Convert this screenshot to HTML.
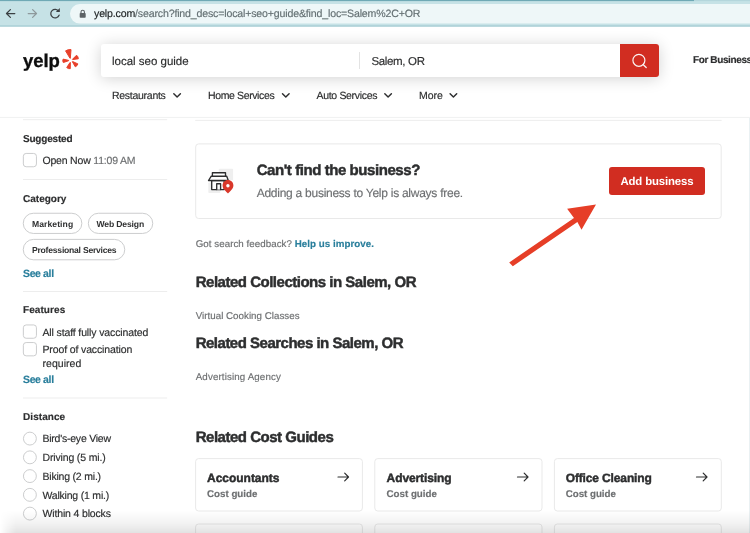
<!DOCTYPE html>
<html lang="en">
<head>
<meta charset="utf-8">
<title>Yelp search - local seo guide - Salem, OR</title>
<style>
html,body{margin:0;padding:0;background:#fff;}
body{will-change:transform;text-rendering:geometricPrecision;width:750px;height:533px;position:relative;overflow:hidden;font-family:"Liberation Sans","DejaVu Sans",sans-serif;color:#2d2e2f;}
.a{position:absolute;white-space:nowrap;line-height:1;}
.t{position:absolute;white-space:nowrap;line-height:1;-webkit-text-stroke:0.16px currentColor;}
.b{font-weight:bold;}
.hv{-webkit-text-stroke:0.45px currentColor;}
.ns{-webkit-text-stroke:0;color:#303132;}
.nw{-webkit-text-stroke:0;}
.g{color:#6e7072;}
.lnk{color:#2a7f9c;font-weight:bold;}
</style>
</head>
<body>

<!-- browser chrome -->
<svg class="a" id="chrome" style="left:0;top:0" width="750" height="28" viewBox="0 0 750 28">
  <rect x="0" y="0" width="750" height="25.6" fill="#c6e2e6"/>
  <rect x="0" y="25.300" width="750" height="1.400" fill="#9fc9d1"/>
  <rect x="0" y="0" width="694" height="1.100" fill="#6fa9b5"/>
  <rect x="694" y="0" width="56" height="1.100" fill="#b4d6dc"/>
  <rect x="70" y="4.100" width="700" height="19.500" rx="9.750" fill="#eef7f8"/>
</svg>
<svg class="a" id="navicons" style="left:0;top:0" width="95" height="26" viewBox="0 0 95 26">
  <g fill="none" stroke="#3b4043" stroke-width="1.25" stroke-linecap="round" stroke-linejoin="round">
    <path d="M14.8 13.5H6.6M10.4 9.6L6.5 13.5L10.4 17.4"/>
    <path d="M28.2 13.5h8.2M32.6 9.6l3.900 3.900l-3.900 3.900" stroke="#8e999c"/>
    <path d="M58.700 11.300A4.300 4.300 0 1 0 59.100 15.200"/>
  </g>
  <path d="M59.800 8v4h-4z" fill="#3b4043"/>
  <rect x="79.700" y="13" width="6" height="4.800" rx="0.800" fill="#5c6366"/>
  <path d="M81 13.200v-1.200a1.700 1.700 0 0 1 3.400 0v1.200" fill="none" stroke="#5c6366" stroke-width="1.100"/>
</svg>
<div class="t" id="url" style="left:94px;top:9px;font-size:10.6px;color:#647073;letter-spacing:-0.166px;"><span style="color:#202526">yelp.com</span>/search?find_desc=local+seo+guide&amp;find_loc=Salem%2C+OR</div>

<!-- header -->
<div class="t b" id="logo" style="left:23px;top:52px;font-size:18.5px;color:#0d0d0d;-webkit-text-stroke:0.35px #0d0d0d;letter-spacing:-0.033px;">yelp</div>
<svg class="a" id="burst" style="left:60px;top:46px" width="22" height="26" viewBox="60 46 22 26">
  <path d="M70.31 58.28L71.03 49.60Q68.10 49.35 65.57 50.86L70.02 58.35zM72.60 59.57L78.35 58.77Q78.26 56.58 76.57 55.19L72.47 59.30zM72.35 61.71L75.30 66.80Q77.28 65.95 77.91 63.90L72.55 61.49zM70.08 62.43L66.73 67.58Q68.24 68.98 70.27 68.66L70.37 62.52zM68.69 60.38L63.12 59.12Q62.31 60.87 63.30 62.52L68.71 60.68z" fill="#e8402a" stroke="#e8402a" stroke-width="1" stroke-linejoin="round"/>
</svg>

<div class="a" id="searchbox" style="left:101px;top:44px;width:558px;height:32.5px;border-radius:3px;background:#fff;box-shadow:0 1.5px 15px rgba(0,0,0,0.18);"></div>
<div class="a" id="sdiv" style="left:359px;top:52px;width:1px;height:17px;background:#e3e3e3;"></div>
<div class="a" id="sbtn" style="left:620px;top:44px;width:39px;height:32.5px;border-radius:0 3px 3px 0;background:#d12d21;"></div>
<svg class="a" id="sicon" style="left:629px;top:49px" width="22" height="22" viewBox="629 49 22 22">
  <circle cx="638.900" cy="60.300" r="6" fill="none" stroke="#fbf3f2" stroke-width="1.200"/>
  <path d="M643.300 64.800L646.200 67.500" stroke="#fbf3f2" stroke-width="1.300" stroke-linecap="round"/>
</svg>
<div class="t" id="q1" style="left:112px;top:57px;font-size:11.5px;letter-spacing:-0.009px;">local seo guide</div>
<div class="t" id="q2" style="left:371.500px;top:57px;font-size:11.5px;letter-spacing:-0.350px;">Salem, OR</div>
<div class="t b" id="forbiz" style="left:693px;top:56px;font-size:10px;letter-spacing:-0.380px;">For Business</div>

<div class="t" id="n1" style="left:112px;top:91px;font-size:10.500px;letter-spacing:-0.275px;">Restaurants</div>
<div class="t" id="n2" style="left:208px;top:91px;font-size:10.500px;letter-spacing:-0.377px;">Home Services</div>
<div class="t" id="n3" style="left:316.500px;top:91px;font-size:10.500px;letter-spacing:-0.322px;">Auto Services</div>
<div class="t" id="n4" style="left:419px;top:91px;font-size:10.500px;letter-spacing:-0.057px;">More</div>
<svg class="a" id="chev" style="left:0;top:85px" width="470" height="20" viewBox="0 0 470 20">
  <g fill="none" stroke="#2d2e2f" stroke-width="1.450" stroke-linecap="round" stroke-linejoin="round">
    <path d="M173.800 8.700l3.300 3.300l3.300-3.300"/>
    <path d="M282.500 8.700l3.300 3.300l3.300-3.300"/>
    <path d="M384.800 8.700l3.300 3.300l3.300-3.300"/>
    <path d="M450.100 8.700l3.300 3.300l3.300-3.300"/>
  </g>
</svg>

<div class="a" id="rmark" style="left:749px;top:507.5px;width:1px;height:3px;background:#9b9b9b;"></div>
<div class="a" id="redge" style="left:749px;top:118px;width:1px;height:415px;background:#eaf1f3;"></div>

<!-- sidebar -->
<svg class="a" id="shapes" style="left:0;top:110px" width="750" height="423" viewBox="0 110 750 423">
  <g fill="none" stroke="#f0f1f1" stroke-width="1">
    <path d="M0 117.400H750"/>
  </g>
  <g fill="none" stroke="#ededed" stroke-width="1">
    <path d="M23 119.700H167.200M195.200 120.400H721.600M23 179.500H167.200M23 291.500H167.200M23 398H167.200"/>
  </g>
  <g fill="#fff" stroke="#e9e9e9" stroke-width="1">
    <rect x="195.70" y="143.90" width="525.50" height="74.60" rx="3"/>
    <rect x="195.60" y="458.60" width="166.80" height="52.40" rx="3"/>
    <rect x="195.60" y="524.00" width="166.80" height="52.50" rx="3"/>
    <rect x="374.80" y="458.60" width="167.20" height="52.40" rx="3"/>
    <rect x="374.80" y="524.00" width="167.20" height="52.50" rx="3"/>
    <rect x="554.40" y="458.60" width="166.90" height="52.40" rx="3"/>
    <rect x="554.40" y="524.00" width="166.90" height="52.50" rx="3"/>
  </g>
  <g fill="#fff" stroke="#c6c7c8" stroke-width="0.900">
    <rect x="23.350" y="153.45" width="13.100" height="13.300" rx="2.800"/>
    <rect x="23.350" y="324.95" width="13.100" height="13.300" rx="2.800"/>
    <rect x="23.350" y="342.55" width="13.100" height="13.300" rx="2.800"/>
    <circle cx="29.900" cy="438.60" r="6.450"/>
    <circle cx="29.900" cy="457.35" r="6.450"/>
    <circle cx="29.900" cy="476.10" r="6.450"/>
    <circle cx="29.900" cy="494.85" r="6.450"/>
    <circle cx="29.900" cy="513.60" r="6.450"/>
    <rect x="23.250" y="213.250" width="58.600" height="20.200" rx="10.100"/>
    <rect x="88.350" y="213.250" width="64.400" height="20.200" rx="10.100"/>
    <rect x="23.250" y="239.400" width="101.500" height="20.400" rx="10.200"/>
  </g>
</svg>
<div class="t b" id="s1" style="left:23px;top:135px;font-size:10px;letter-spacing:-0.204px;">Suggested</div>
<div class="t" id="s2" style="left:42.50px;top:156px;font-size:10.500px;letter-spacing:-0.196px;">Open Now <span class="g">11:09 AM</span></div>

<div class="t b" id="s3" style="left:23px;top:195px;font-size:10px;letter-spacing:0.006px;">Category</div>
<div class="t b ns" id="p1" style="left:32.00px;top:220px;font-size:8.6px;letter-spacing:0.067px;">Marketing</div>
<div class="t b ns" id="p2" style="left:96.50px;top:220px;font-size:8.6px;letter-spacing:-0.153px;">Web Design</div>
<div class="t b ns" id="p3" style="left:32.00px;top:246px;font-size:8.6px;letter-spacing:-0.235px;">Professional Services</div>
<div class="t lnk" id="s4" style="left:23px;top:269px;font-size:10.500px;letter-spacing:-0.369px;">See all</div>

<div class="t b" id="s5" style="left:23px;top:306px;font-size:10px;letter-spacing:0.075px;">Features</div>
<div class="t" id="s6" style="left:42.500px;top:328px;font-size:10.500px;letter-spacing:-0.129px;">All staff fully vaccinated</div>
<div class="t" id="s7" style="left:42.500px;top:345px;font-size:10.500px;letter-spacing:-0.131px;">Proof of vaccination</div>
<div class="t" id="s8" style="left:42.500px;top:359px;font-size:10.500px;letter-spacing:0.045px;">required</div>
<div class="t lnk" id="s9" style="left:23px;top:375px;font-size:10.500px;letter-spacing:-0.369px;">See all</div>

<div class="t b" id="s10" style="left:23.00px;top:413px;font-size:10px;letter-spacing:0.063px;">Distance</div>
<div class="t" id="r1" style="left:42.50px;top:434px;font-size:10.500px;letter-spacing:-0.237px;">Bird's-eye View</div>
<div class="t" id="r2" style="left:42.50px;top:453px;font-size:10.500px;letter-spacing:-0.156px;">Driving (5 mi.)</div>
<div class="t" id="r3" style="left:42.50px;top:472px;font-size:10.500px;letter-spacing:-0.205px;">Biking (2 mi.)</div>
<div class="t" id="r4" style="left:42.50px;top:491px;font-size:10.500px;letter-spacing:-0.208px;">Walking (1 mi.)</div>
<div class="t" id="r5" style="left:42.50px;top:509px;font-size:10.500px;letter-spacing:-0.155px;">Within 4 blocks</div>

<!-- main -->
<svg class="a" id="storeicon" style="left:204px;top:164px" width="34" height="34" viewBox="204 164 34 34">
  <rect x="218.800" y="168.800" width="14.300" height="11.500" rx="0.800" fill="#efefef"/>
  <rect x="208.300" y="182.400" width="12" height="10.700" rx="0.800" fill="#efefef"/>
  <g fill="#fff" stroke="#2d2e2f" stroke-width="1.350" stroke-linejoin="round" stroke-linecap="round">
    <path d="M211.700 180.500V189.600H224.200V180.500z"/>
    <path d="M211.300 176.200H226.700L228.300 180.500H208.500z"/>
    <path d="M212.400 176.200V172.700H225.500V176.200z"/>
    <path d="M216.700 189.600V183.700H220.600V189.600"/>
  </g>
  <path d="M228 180.100c-3.050 0-5.400 2.350-5.400 5.300c0 3.300 3.700 6.300 5.400 8c1.700-1.700 5.400-4.700 5.400-8c0-2.950-2.350-5.300-5.400-5.300z" fill="#d9372a"/>
  <circle cx="227.900" cy="185.700" r="1.700" fill="#fff"/>
</svg>
<div class="t b hv" id="h1" style="left:256.700px;top:163px;font-size:15px;letter-spacing:-0.432px;">Can't find the business?</div>
<div class="t g" id="h1s" style="left:256.700px;top:187px;font-size:12px;letter-spacing:-0.259px;">Adding a business to Yelp is always free.</div>
<div class="a" id="addbtn" style="left:609px;top:167px;width:95.500px;height:27.500px;border-radius:3px;background:#d12d21;"></div>
<div class="t b nw" id="addtxt" style="left:620.4px;top:177px;font-size:11.4px;color:#fff;letter-spacing:-0.141px;">Add business</div>

<div class="t g" id="fb" style="left:195.700px;top:240px;font-size:9.750px;letter-spacing:0.044px;">Got search feedback? <span class="lnk">Help us improve.</span></div>

<div class="t b hv" id="h2" style="left:195.700px;top:275px;font-size:15px;letter-spacing:-0.487px;">Related Collections in Salem, OR</div>
<div class="t g" id="l1" style="left:195.700px;top:312px;font-size:9.750px;letter-spacing:0.025px;">Virtual Cooking Classes</div>
<div class="t b hv" id="h3" style="left:195.700px;top:336px;font-size:15px;letter-spacing:-0.499px;">Related Searches in Salem, OR</div>
<div class="t g" id="l2" style="left:195.700px;top:373px;font-size:9.750px;letter-spacing:0.132px;">Advertising Agency</div>
<div class="t b hv" id="h4" style="left:195.700px;top:430px;font-size:15px;letter-spacing:-0.479px;">Related Cost Guides</div>


<div class="t b hv" id="c1" style="left:207.100px;top:472px;font-size:12px;letter-spacing:-0.035px;">Accountants</div>
<div class="t b g" id="c1s" style="left:207.100px;top:490px;font-size:9.75px;letter-spacing:-0.018px;">Cost guide</div>
<div class="t b hv" id="c2" style="left:386.600px;top:472px;font-size:12px;letter-spacing:-0.101px;">Advertising</div>
<div class="t b g" id="c2s" style="left:386.600px;top:490px;font-size:9.75px;letter-spacing:-0.018px;">Cost guide</div>
<div class="t b hv" id="c3" style="left:565.700px;top:472px;font-size:12px;letter-spacing:-0.135px;">Office Cleaning</div>
<div class="t b g" id="c3s" style="left:565.700px;top:490px;font-size:9.75px;letter-spacing:-0.018px;">Cost guide</div>
<svg class="a" id="arrows" style="left:330px;top:468px" width="390" height="18" viewBox="0 0 390 18">
  <g fill="none" stroke="#2d2e2f" stroke-width="1.200" stroke-linecap="round" stroke-linejoin="round">
    <path d="M8 9h10.500M14.700 5.200l3.800 3.800l-3.800 3.800"/>
    <path d="M187.500 9h10.500M194.200 5.200l3.800 3.800l-3.800 3.800"/>
    <path d="M366.500 9h10.500M373.200 5.200l3.800 3.800l-3.800 3.800"/>
  </g>
</svg>

<!-- annotation arrow -->
<svg class="a" id="anno" style="left:500px;top:195px" width="110" height="80" viewBox="500 195 110 80">
  <path d="M509.200 262.400L574 218L567.100 208.700L596 204.600L581.500 229.800L577.400 222.100L512.800 266.200z" fill="#e63e27"/>
</svg>

<!-- bottom shadow -->
<div class="a" id="bshadow" style="left:0;top:510px;width:750px;height:23px;background:linear-gradient(to bottom,rgba(0,0,0,0) 0%,rgba(0,0,0,0.04) 48%,rgba(0,0,0,0.075) 76%,rgba(0,0,0,0.115) 100%);-webkit-mask-image:linear-gradient(to right,rgba(0,0,0,0) 0,rgba(0,0,0,0.5) 7px,#000 16px);mask-image:linear-gradient(to right,rgba(0,0,0,0) 0,rgba(0,0,0,0.5) 7px,#000 16px);"></div>

</body>
</html>
